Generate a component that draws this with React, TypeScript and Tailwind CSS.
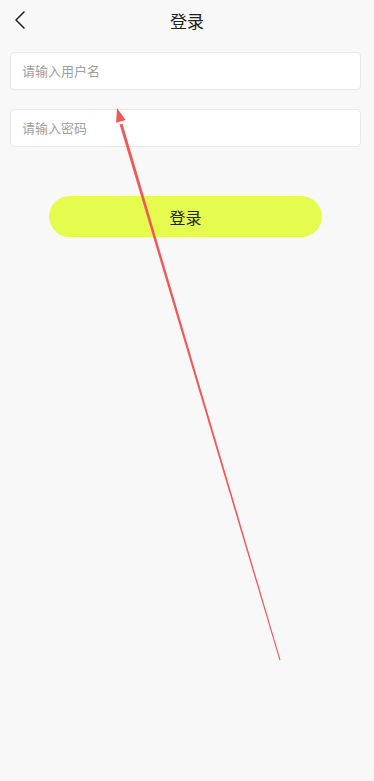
import React from "react";

export default function App() {
  return (
    <div
      className="relative w-[374px] h-[781px] bg-[#f8f8f8] overflow-hidden"
      style={{ fontFamily: '"Noto Sans CJK SC", "Noto Sans", sans-serif' }}
    >
      <div className="relative h-[40px] flex items-center justify-center">
        <button className="absolute left-[10px] top-[9px] w-[20px] h-[22px] flex items-center justify-center">
          <svg width="14" height="20" viewBox="0 0 14 20" fill="none">
            <path d="M11 2 L3 10 L11 18" stroke="#222" strokeWidth="1.6" strokeLinecap="round" strokeLinejoin="round" />
          </svg>
        </button>
        <span className="text-[17px] text-[#222] leading-none">登录</span>
      </div>
      <div className="pl-[10px] pr-[13px] pt-[12px] flex flex-col gap-[19px]">
        <div className="h-[38px] bg-white border border-[#e9e9e9] rounded-[4px] flex items-center pl-[11px]">
          <input
            className="w-full bg-transparent outline-none text-[13px] text-[#333] placeholder:text-[#a0a0a0]"
            placeholder="请输入用户名"
          />
        </div>
        <div className="h-[38px] bg-white border border-[#e9e9e9] rounded-[4px] flex items-center pl-[11px]">
          <input
            type="password"
            className="w-full bg-transparent outline-none text-[13px] text-[#333] placeholder:text-[#a0a0a0]"
            placeholder="请输入密码"
          />
        </div>
      </div>
      <div className="pt-[49px] pl-[49px]">
        <button className="w-[273px] h-[41px] rounded-full bg-[#e5fc4e] text-[16px] text-[#222] flex items-center justify-center">
          登录
        </button>
      </div>
      <svg className="absolute left-0 top-0 pointer-events-none" width="374" height="781" viewBox="0 0 374 781">
        <polygon
          points="280.5,660 279.5,660.3 119.6,124.4 122.4,123.6"
          fill="#f25656"
        />
        <polygon points="117,108 125.7,120 116.1,122.8" fill="#f25656" />
      </svg>
    </div>
  );
}
